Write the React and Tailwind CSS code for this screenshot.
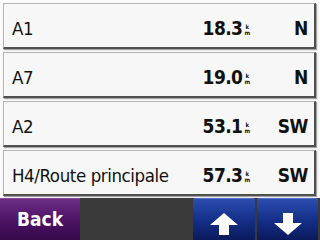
import React from "react";

// Garmin-style route list: name, distance, heading
const rows = [
  { name: "A1", dist: "18.3", dir: "N" },
  { name: "A7", dist: "19.0", dir: "N" },
  { name: "A2", dist: "53.1", dir: "SW" },
  { name: "H4/Route principale", dist: "57.3", dir: "SW" },
];

const font = { fontFamily: '"DejaVu Sans Condensed", "DejaVu Sans", sans-serif' };

const Arrow = ({ down = false }) => (
  <svg width="28" height="22" viewBox="0 0 28 22" className={down ? "rotate-180" : ""}>
    <path d="M14 0 L28 12 L19 12 L19 22 L9 22 L9 12 L0 12 Z" fill="#ffffff" />
  </svg>
);

const Row = ({ name, dist, dir }) => (
  <div className="flex h-[46px] items-center bg-[#f7f7f7] border-t border-l border-[#b4b4b4] border-r-2 border-b-2 border-r-[#505050] border-b-[#505050] shadow-[1px_1px_1px_rgba(0,0,0,0.35)] pl-[8px] pr-[6px] pt-[6px]">
    <div className="flex-1 text-[18.5px] text-[#111] tracking-[-0.4px] font-stretch-condensed truncate">{name}</div>
    <div className="flex items-center">
      <span className="text-[19px] font-bold text-[#111] tracking-[-0.6px] font-stretch-condensed">{dist}</span>
      <span className="flex flex-col items-center ml-[2px] mt-[3px] text-[6px] leading-[6px] font-bold text-[#111]">
        <span>k</span>
        <span>m</span>
      </span>
    </div>
    <div className="w-[58px] text-right text-[19px] font-bold text-[#111] tracking-[-0.4px] font-stretch-condensed">{dir}</div>
  </div>
);

export default function App() {
  return (
    <div className="w-[320px] h-[240px] bg-[#fafafa] flex flex-col overflow-hidden" style={font}>
      <div className="flex flex-col gap-[3px] pt-[3px] pl-[3px] pr-[4px]">
        {rows.map((r) => (
          <Row key={r.name} {...r} />
        ))}
      </div>
      <div className="mt-[2px] flex-1 flex bg-[#3a3a3a]">
        <button className="w-[80px] flex items-center justify-center bg-gradient-to-b from-[#6c2c86] via-[#4e1466] to-[#36084a] border-t border-[#8a4aa0] text-white text-[19px] font-bold font-stretch-condensed">
          Back
        </button>
        <div className="flex-1" />
        <button className="w-[62px] flex items-end justify-center pb-[5px] rounded-t-[3px] bg-gradient-to-b from-[#2c4cae] via-[#15308a] to-[#0a1a5c] border-t border-[#5070c8]">
          <Arrow />
        </button>
        <div className="w-[2px]" />
        <button className="w-[61px] mr-[2px] flex items-end justify-center pb-[5px] rounded-t-[3px] bg-gradient-to-b from-[#2c4cae] via-[#15308a] to-[#0a1a5c] border-t border-[#5070c8]">
          <Arrow down />
        </button>
      </div>
    </div>
  );
}
